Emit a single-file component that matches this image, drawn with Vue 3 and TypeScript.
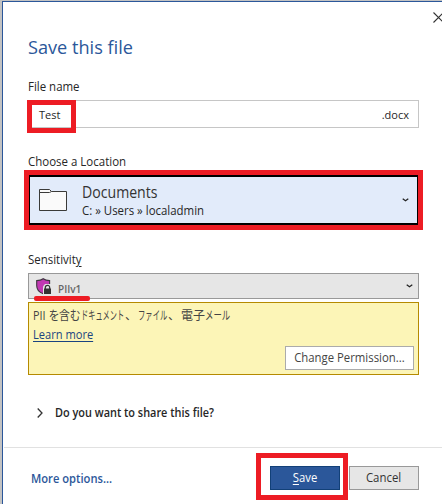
<script setup lang="ts">
import { ref } from 'vue'

const fileName = ref('Test')
const extension = '.docx'
const folder = { name: 'Documents', path: 'C: » Users » localadmin' }
const label = {
  name: 'PIIv1',
  description: [
    { text: 'PII', kind: 'latin' },
    { text: 'を含む', kind: 'hira' },
    { text: 'ドキュメント', kind: 'kata-a' },
    { text: '、', kind: 'comma' },
    { text: 'ファイル', kind: 'kata-b' },
    { text: '、', kind: 'comma' },
    { text: '電子', kind: 'kanji' },
    { text: 'メール', kind: 'kata-c' },
  ],
}
</script>

<template>
  <div class="backdrop">
    <main class="dialog">
      <svg class="close" width="11" height="11" viewBox="0 0 11 11"><path d="M.5 .5l10 10M10.500 .5l-10 10" /></svg>
      <section class="form">
        <h1><span class="t-title">Save this file</span></h1>
        <div class="caption c-name"><span class="t-name">File name</span></div>
        <div class="name-field">
          <span class="t-test">{{ fileName }}</span>
          <span class="t-ext">{{ extension }}</span>
          <i class="mark mark-name"></i>
        </div>
        <div class="caption c-loc"><span class="t-loc">Choose a Location</span></div>
        <div class="location">
          <svg class="folder" width="28" height="22" viewBox="0 0 28 22">
            <path d="M.5 21.500V.5H10.500L12.500 2.500H27.500V21.500Z" fill="#fafafa" stroke="#3a3a38" />
            <path d="M.5 3.500H10.500L12.500 2.500" fill="none" stroke="#3a3a38" />
          </svg>
          <div class="place">
            <div class="place-name"><span class="t-docs">{{ folder.name }}</span></div>
            <div class="place-path"><span class="t-path">{{ folder.path }}</span></div>
          </div>
          <svg class="drop" width="7" height="4" viewBox="0 0 7 4"><path d="M.7 .7L3.500 2.800L6.300 .7" /></svg>
          <i class="mark mark-location"></i>
        </div>
        <div class="caption c-sens"><span class="t-sens">Sensitivit<u>y</u></span></div>
        <div class="sensitivity">
          <svg class="shield" width="16" height="17" viewBox="0 0 16 17">
            <path d="M7.200 .7C5.500 2 3.300 2.600 .7 2.600V7.500C.7 11.500 3 14.300 7.200 15.700C11.300 14.300 13.600 11.500 13.600 7.500V2.600C11 2.600 8.900 2 7.200 .7Z" fill="#c239b3" stroke="#3f3540" stroke-width="1.100" />
            <path d="M7 8.500L9 6H16V17H7Z" fill="#e6e6e6" />
            <path d="M9.300 11V9.500a2.200 2.200 0 0 1 4.400 0V11" fill="none" stroke="#333" stroke-width="1.200" />
            <path d="M8 10.500H15V16H8Z" fill="#333" />
          </svg>
          <span class="t-label">{{ label.name }}</span>
          <svg class="drop" width="7" height="4" viewBox="0 0 7 4"><path d="M.7 .7L3.500 2.800L6.300 .7" /></svg>
          <i class="stroke"></i>
        </div>
        <div class="policy">
          <div class="description"><span v-for="(run, i) in label.description" :key="i" :class="run.kind">{{ run.text }}</span></div>
          <a class="learn"><span class="t-learn">Learn more</span></a>
          <button class="change"><span class="t-change">Change Permission...</span></button>
        </div>
        <div class="share">
          <svg width="6" height="10" viewBox="0 0 6 10"><path d="M.7 .5L5 5L.7 9.500" /></svg>
          <span class="t-share">Do you want to share this file?</span>
        </div>
      </section>
      <footer>
        <a class="more"><span class="t-more">More options...</span></a>
        <button class="save"><span class="t-save"><u>S</u>ave</span><i class="mark mark-save"></i></button>
        <button class="cancel"><span class="t-cancel">Cancel</span></button>
      </footer>
    </main>
  </div>
</template>

<style>
body { overflow: hidden; }
</style>

<style scoped>
* { box-sizing: border-box; }
.backdrop {
  width: 442px; height: 504px; padding: 1px 0 0 2px; overflow: hidden;
  background: #c3c3c3;
  font: 12px/16px "Open Sans", "Noto Sans CJK JP", sans-serif;
  color: #262626; white-space: nowrap;
}
.dialog {
  position: relative; height: 503px; background: #fff;
  border-top: 1px solid #2b579a; border-left: 1px solid #2b579a;
}
.close { position: absolute; left: 430px; top: 10px; fill: none; stroke: #333; stroke-width: 1.100; }
.form { height: 445px; padding: 32px 23px 0 25px; }
h1 { margin: 0; height: 28px; font-size: 19px; line-height: 27px; font-weight: 400; color: #2b579a; }
.caption { height: 16px; }
.c-name { margin-top: 17px; }
.c-loc { margin-top: 26px; }
.c-sens { margin-top: 27px; }
.name-field {
  position: relative; height: 28px; margin-top: 5px; padding: 1px 9px 0 10px;
  display: flex; align-items: center; justify-content: space-between;
  border: 1px solid #c6c6c6; font-size: 11px;
}
.mark { position: absolute; border: 5px solid #ed1c24; }
.mark-name { left: -2px; top: -1px; width: 49px; height: 33px; }
.location {
  position: relative; height: 50px; margin: 5px 1px 0 1px; padding: 0 8px 0 9px;
  display: flex; align-items: center; background: #e2ebfa;
  border: solid #000; border-width: 2px 1px;
}
.mark-location { left: -6px; top: -7px; right: -6px; bottom: -7px; }
.place { margin-left: 15px; flex: 1; }
.place-name { font-size: 15.500px; line-height: 20px; height: 19px; color: #333; }
.place-path { height: 18px; line-height: 20px; }
.folder { margin-top: -1px; }
.drop { fill: none; stroke: #222; stroke-width: 1.200; margin-left: auto; }
.sensitivity {
  position: relative; height: 26px; margin-top: 5px; padding: 0 5px 0 7px;
  display: flex; align-items: center; background: #e6e6e6; border: 1px solid #999;
}
.t-label { margin: 5px 0 0 6px; font-size: 10px; line-height: 14px; font-weight: 600; color: #666; }
.stroke { position: absolute; left: 5px; top: 22px; width: 56px; height: 5px; border-radius: 2px; background: #ed1c24; z-index: 1; }
.policy {
  height: 73px; margin-top: 3px; padding: 4px 4px 0; display: flex; flex-direction: column;
  align-items: flex-start; background: #fcf5b7; border: 1px solid #b58a00;
}
.description { display: flex; height: 18px; line-height: 18px; color: #444; }
.learn { height: 16px; margin-top: 2px; color: #1a4480; }
button { padding: 0; font: inherit; text-align: center; border-radius: 0; white-space: nowrap; }
.change { align-self: flex-end; width: 129px; height: 24px; margin-top: 3px; background: #fff; border: 1px solid #ababab; color: #444; }
.share { display: flex; align-items: center; height: 18px; margin: 29px 0 0 9px; font-weight: 600; }
.share svg { margin-right: 12px; fill: none; stroke: #333; stroke-width: 1.300; }
footer {
  height: 57px; margin-left: 1px; padding: 18px 23px 0 27px; display: flex; align-items: flex-start;
  border-top: 1px solid #e1e1e1;
}
.more { flex: 1; height: 24px; line-height: 25px; font-weight: 600; color: #2b579a; }
.save, .cancel { position: relative; width: 70px; height: 24px; }
.save { margin-right: 9px; background: #2b579a; border: 1px solid #124078; color: #fff; }
.cancel { background: #e6e6e6; border: 1px solid #999; color: #333; }
.mark-save { left: -15px; top: -14px; width: 92px; height: 47px; }
u { text-underline-offset: 2px; }

/* condensed UI lettering */
h1 span, .caption span, .place span, .description span, .learn span, .t-share, .t-more, .t-change, .t-cancel, .t-save {
  display: inline-block; transform-origin: left center;
}
.t-title { transform: scaleX(.955); }
.t-name { transform: scaleX(.955); }
.t-loc { transform: scaleX(.957); }
.t-docs { transform: scaleX(.91); }
.t-path { transform: scaleX(.953); }
.t-sens { transform: scaleX(.955); }
/* each run keeps its own advance, so the glyphs are scaled from its left edge */
.description span { flex: none; transform-origin: 0 50%; font-feature-settings: "palt"; }
.latin { width: 15.500px; transform: scaleX(.9); }
.hira { width: 32.500px; transform: scaleX(.9); }
.kata-a { width: 44px; transform: scaleX(.66); font-feature-settings: normal; }
.description .kata-a { font-feature-settings: normal; transform: scaleX(.6); }
.comma { width: 13px; }
.kata-b { width: 30px; }
.description .kata-b { font-feature-settings: normal; transform: scaleX(.61); }
.kanji { width: 24px; }
.description .kata-c { width: 26px; font-feature-settings: normal; transform: scaleX(.7); }
.t-learn { transform: scaleX(.925); text-decoration: underline; text-underline-offset: 2px; }
.t-share { transform: scaleX(.909); }
.t-more { transform: scaleX(.931); }
.change .t-change { transform-origin: center; transform: scaleX(.945); }
.cancel .t-cancel { transform-origin: center; transform: scaleX(.95); }
.save .t-save { transform-origin: center; transform: scaleX(.94); }
</style>
